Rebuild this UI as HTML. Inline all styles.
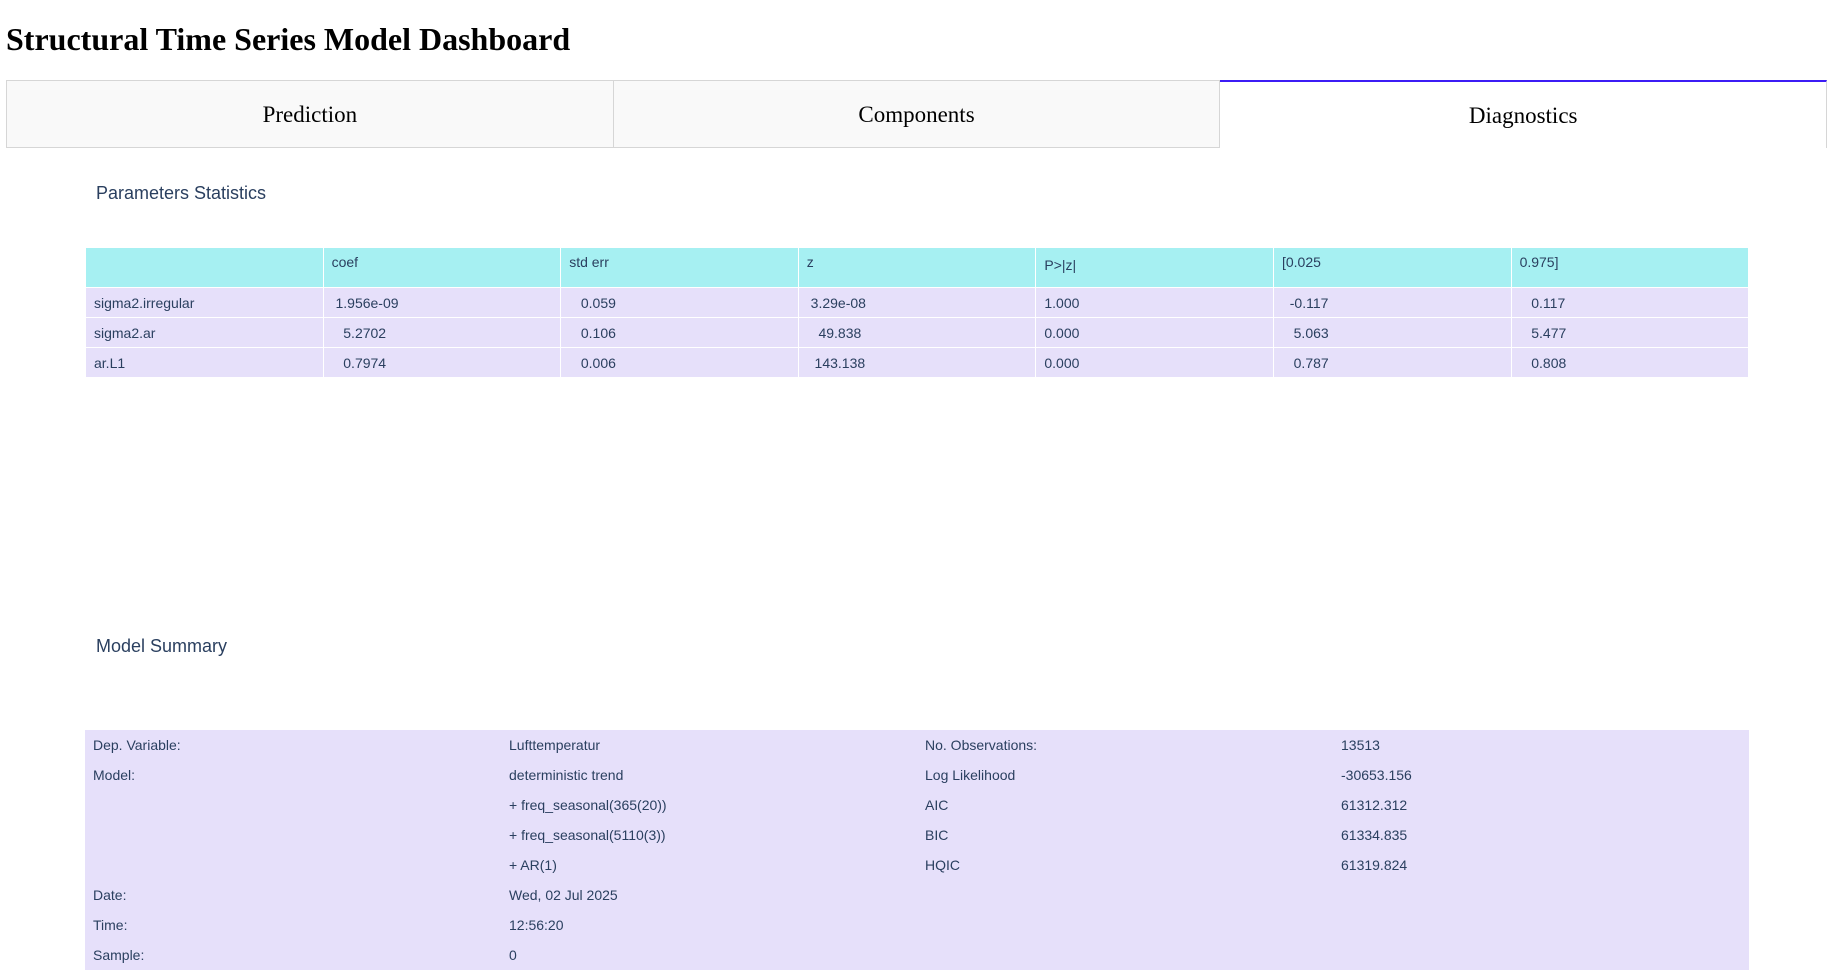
<!DOCTYPE html>
<html><head><meta charset="utf-8"><style>
body{margin:0;background:#fff;font-family:"Liberation Serif",serif;}
h1{position:absolute;left:6px;top:17px;margin:0;font-size:32px;font-weight:bold;line-height:44px;color:#000;}
.tabs{position:absolute;left:6px;top:80px;width:1821px;height:68px;display:flex;}
.tab{flex:1;box-sizing:border-box;background:#f9f9f9;border:1px solid #d6d6d6;display:flex;align-items:center;justify-content:center;font-size:23px;color:#000;padding-top:2px;}
.tab+.tab{border-left:none;}
.tab.sel{background:#fff;border-top:2px solid #3c1cf5;border-bottom:none;}
.sec{position:absolute;left:96px;font-family:"Liberation Sans",sans-serif;font-size:18px;color:#2a3f5f;}
table{position:absolute;left:85px;border-collapse:collapse;font-family:"Liberation Sans",sans-serif;font-size:14px;color:#2a3f5f;table-layout:fixed;}
td{height:30px;padding:0 0 0 8px;box-sizing:border-box;border:1px solid #fff;background:#e6e0fa;white-space:pre;}
.p td{width:237.6px;}
.p tr.h td{background:#a6f0f2;height:40px;vertical-align:top;padding-top:6px;}
.s td{width:416px;border:none;}
</style></head><body>
<h1>Structural Time Series Model Dashboard</h1>
<div class="tabs"><div class="tab">Prediction</div><div class="tab">Components</div><div class="tab sel">Diagnostics</div></div>
<div class="sec" style="top:183px">Parameters Statistics</div>
<table class="p" style="top:247px;width:1663px">
<tr class="h"><td></td><td>coef</td><td>std err</td><td>z</td><td style="padding-top:9px">P&gt;|z|</td><td>[0.025</td><td>0.975]</td></tr>
<tr><td>sigma2.irregular</td><td> 1.956e-09</td><td>   0.059</td><td> 3.29e-08</td><td>1.000</td><td>  -0.117</td><td>   0.117</td></tr>
<tr><td>sigma2.ar</td><td>   5.2702</td><td>   0.106</td><td>   49.838</td><td>0.000</td><td>   5.063</td><td>   5.477</td></tr>
<tr><td>ar.L1</td><td>   0.7974</td><td>   0.006</td><td>  143.138</td><td>0.000</td><td>   0.787</td><td>   0.808</td></tr>
</table>
<div class="sec" style="top:636px">Model Summary</div>
<table class="s" style="top:730px;width:1663px">
<tr><td>Dep. Variable:</td><td>Lufttemperatur</td><td>No. Observations:</td><td>13513</td></tr>
<tr><td>Model:</td><td>deterministic trend</td><td>Log Likelihood</td><td>-30653.156</td></tr>
<tr><td></td><td>+ freq_seasonal(365(20))</td><td>AIC</td><td>61312.312</td></tr>
<tr><td></td><td>+ freq_seasonal(5110(3))</td><td>BIC</td><td>61334.835</td></tr>
<tr><td></td><td>+ AR(1)</td><td>HQIC</td><td>61319.824</td></tr>
<tr><td>Date:</td><td>Wed, 02 Jul 2025</td><td></td><td></td></tr>
<tr><td>Time:</td><td>12:56:20</td><td></td><td></td></tr>
<tr><td>Sample:</td><td>0</td><td></td><td></td></tr>
</table>
</body></html>
